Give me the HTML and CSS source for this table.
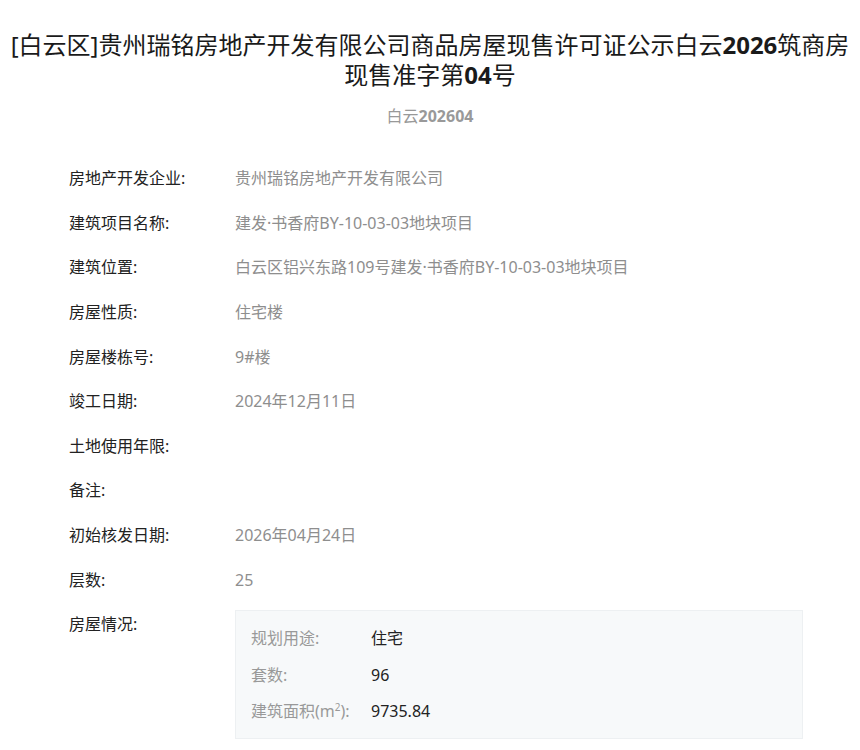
FILE: index.html
```html
<!DOCTYPE html>
<html lang="zh-CN">
<head>
  <meta charset="UTF-8" />
  <meta name="viewport" content="width=device-width, initial-scale=1.0" />
  <title>商品房屋现售许可证公示</title>
  <link rel="stylesheet" href="styles.css">
</head>
<body>
  <div class="page">
    <h1 class="title">[白云区]贵州瑞铭房地产开发有限公司商品房屋现售许可证公示白云<span class="num">2026</span>筑商房现售准字第<span class="num">04</span>号</h1>
    <div class="sub">白云<span class="num">202604</span></div>

    <div class="info">
      <div class="row"><div class="label">房地产开发企业:</div><div class="value">贵州瑞铭房地产开发有限公司</div></div>
      <div class="row"><div class="label">建筑项目名称:</div><div class="value">建发·书香府BY-10-03-03地块项目</div></div>
      <div class="row"><div class="label">建筑位置:</div><div class="value">白云区铝兴东路109号建发·书香府BY-10-03-03地块项目</div></div>
      <div class="row"><div class="label">房屋性质:</div><div class="value">住宅楼</div></div>
      <div class="row"><div class="label">房屋楼栋号:</div><div class="value">9#楼</div></div>
      <div class="row"><div class="label">竣工日期:</div><div class="value">2024年12月11日</div></div>
      <div class="row"><div class="label">土地使用年限:</div><div class="value"></div></div>
      <div class="row"><div class="label">备注:</div><div class="value"></div></div>
      <div class="row"><div class="label">初始核发日期:</div><div class="value">2026年04月24日</div></div>
      <div class="row"><div class="label">层数:</div><div class="value">25</div></div>
      <div class="row">
        <div class="label">房屋情况:</div>
        <div class="detail">
          <div class="drow"><span class="dlabel">规划用途:</span><span class="dvalue">住宅</span></div>
          <div class="drow"><span class="dlabel">套数:</span><span class="dvalue">96</span></div>
          <div class="drow"><span class="dlabel">建筑面积(m<sup>2</sup>):</span><span class="dvalue">9735.84</span></div>
        </div>
      </div>
    </div>
  </div>
</body>
</html>
```

FILE: styles.css
```css
body {
  margin: 0;
  font-family: "Noto Sans", "Noto Sans CJK SC", sans-serif;
  color: #222;
  background: #fff;
}
.page {
  padding: 30px 10px 0;
}
.title {
  margin: 0 auto;
  max-width: 840px;
  font-size: 24px;
  line-height: 30px;
  font-weight: normal;
  text-align: center;
  color: #1a1a1a;
}
.num {
  font-weight: bold;
}
.sub {
  margin-top: 14px;
  font-size: 16px;
  line-height: 24px;
  text-align: center;
  color: #999;
}
.info {
  margin-top: 28px;
  padding-left: 59px;
}
.row {
  display: grid;
  grid-template-columns: 166px 568px;
  padding: 10.3px 0;
  font-size: 16px;
  line-height: 24px;
}
.label {
  color: #222;
}
.value {
  color: #8e8e8e;
}
.detail {
  margin-top: -2px;
  padding: 9px 15px 8px;
  background: #f7f9fa;
  border: 1px solid #edf0f2;
}
.drow {
  display: flex;
  padding: 6.25px 0;
}
.dlabel {
  width: 120px;
  color: #999;
}
.dvalue {
  color: #222;
}
sup {
  font-size: 10px;
  line-height: 0;
}
```
